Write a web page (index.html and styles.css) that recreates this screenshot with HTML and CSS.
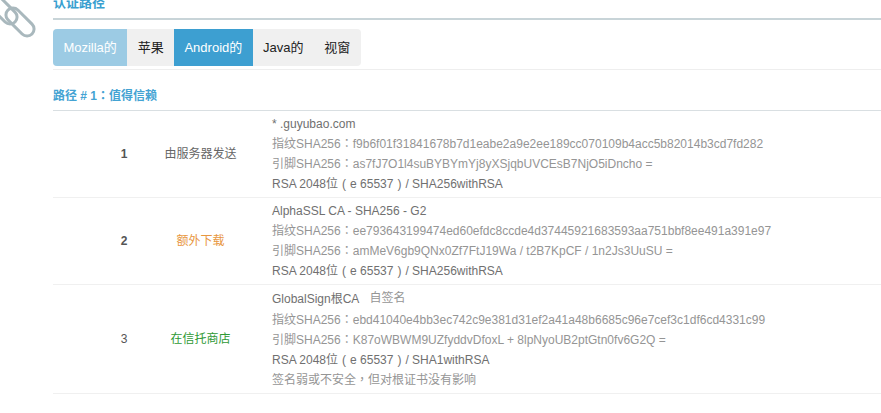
FILE: index.html
```html
<!DOCTYPE html>
<html lang="zh-CN">
<head>
<meta charset="utf-8">
<title>认证路径</title>
<link rel="stylesheet" href="styles.css">
</head>
<body>
<svg class="chain" viewBox="0 0 36 40" fill="none" stroke="#a9b8bd" stroke-width="3">
  <rect x="-4" y="-7" width="14" height="34" rx="7" transform="rotate(-45 3 10)"/>
  <rect x="13" y="5" width="14" height="34" rx="7" transform="rotate(-45 20 22)"/>
</svg>
<main class="content">
  <h2 class="heading">认证路径</h2>
  <div class="tabbar">
    <div class="tabs">
      <span class="tab tab-faded">Mozilla的</span>
      <span class="tab">苹果</span>
      <span class="tab tab-active">Android的</span>
      <span class="tab">Java的</span>
      <span class="tab">视窗</span>
    </div>
  </div>
  <h3 class="path-title">路径 # 1<span class="fw">：</span>值得信赖</h3>
  <div class="rows">
    <div class="row">
      <div class="num">1</div>
      <div class="status">由服务器发送</div>
      <div class="info">
        <div class="line dark">* .guyubao.com</div>
        <div class="line">指纹SHA256<span class="fw">：</span>f9b6f01f31841678b7d1eabe2a9e2ee189cc070109b4acc5b82014b3cd7fd282</div>
        <div class="line">引脚SHA256<span class="fw">：</span>as7fJ7O1l4suBYBYmYj8yXSjqbUVCEsB7NjO5iDncho =</div>
        <div class="line dark">RSA 2048位<span class="paren">(</span>e 65537<span class="paren">)</span>/ SHA256withRSA</div>
      </div>
    </div>
    <div class="row">
      <div class="num">2</div>
      <div class="status orange">额外下载</div>
      <div class="info">
        <div class="line dark">AlphaSSL CA - SHA256 - G2</div>
        <div class="line">指纹SHA256<span class="fw">：</span>ee793643199474ed60efdc8ccde4d37445921683593aa751bbf8ee491a391e97</div>
        <div class="line">引脚SHA256<span class="fw">：</span>amMeV6gb9QNx0Zf7FtJ19Wa / t2B7KpCF / 1n2Js3UuSU =</div>
        <div class="line dark">RSA 2048位<span class="paren">(</span>e 65537<span class="paren">)</span>/ SHA256withRSA</div>
      </div>
    </div>
    <div class="row">
      <div class="num num-plain">3</div>
      <div class="status green">在信托商店</div>
      <div class="info">
        <div class="line first dark">GlobalSign根CA<span class="self">自签名</span></div>
        <div class="line">指纹SHA256<span class="fw">：</span>ebd41040e4bb3ec742c9e381d31ef2a41a48b6685c96e7cef3c1df6cd4331c99</div>
        <div class="line">引脚SHA256<span class="fw">：</span>K87oWBWM9UZfyddvDfoxL + 8lpNyoUB2ptGtn0fv6G2Q =</div>
        <div class="line dark">RSA 2048位<span class="paren">(</span>e 65537<span class="paren">)</span>/ SHA1withRSA</div>
        <div class="line">签名弱或不安全<span class="fw">，</span>但对根证书没有影响</div>
      </div>
    </div>
  </div>
</main>
</body>
</html>
```
FILE: styles.css
```css
* { box-sizing: border-box; }
html, body { height: 100%; }
body {
  margin: 0;
  overflow: hidden;
  background: #fff;
  font-family: "Liberation Sans", "Noto Sans CJK SC", sans-serif;
  font-size: 12px;
  color: #777;
  display: flex;
  align-items: flex-start;
}
.chain { flex: none; width: 36px; height: 40px; margin-right: 17px; }
.content { flex: 1; min-width: 0; }
.heading {
  margin: -7px 0 0;
  height: 27px;
  padding-top: 1px;
  font-size: 13px;
  line-height: 17px;
  font-weight: bold;
  color: #3a9fd0;
  border-bottom: 2px solid #c8d4d8;
}
.tabbar { padding: 9px 0 3px; border-bottom: 1px solid #eee; }
.tabs { display: inline-flex; height: 37px; background: #f0f0f0; border-radius: 4px; overflow: hidden; }
.tab { padding: 0 10.4px; line-height: 37px; font-size: 13px; color: #222; }
.tab-faded { background: #9ccbe4; color: #fff; }
.tab-active { background: #3d9fd1; color: #fff; }
.path-title {
  margin: 0;
  height: 41px;
  padding-top: 18px;
  font-size: 12px;
  line-height: 17px;
  font-weight: bold;
  color: #44a3d3;
  border-bottom: 1px solid #d9dfe2;
}
.row {
  display: flex;
  align-items: center;
  padding: 3px 0;
  border-bottom: 1px solid #f0f0f0;
}
.num { width: 98px; padding-left: 44px; text-align: center; font-weight: bold; color: #555; }
.num-plain { font-weight: normal; }
.status { width: 99px; margin-right: 22px; padding-bottom: 3px; text-align: center; color: #666; }
.orange { color: #e8973f; }
.green { color: #2f9a35; }
.info { flex: 1; }
.line { line-height: 20px; white-space: nowrap; color: #959595; }
.dark { color: #707070; }
.first { line-height: 22px; }
.self { margin-left: 10px; color: #959595; position: relative; top: -1px; }
.fw { font-family: "Liberation Sans", "Noto Sans CJK TC", sans-serif; font-feature-settings: "locl" 0; }
.paren { display: inline-block; width: 12px; text-align: center; }
```
